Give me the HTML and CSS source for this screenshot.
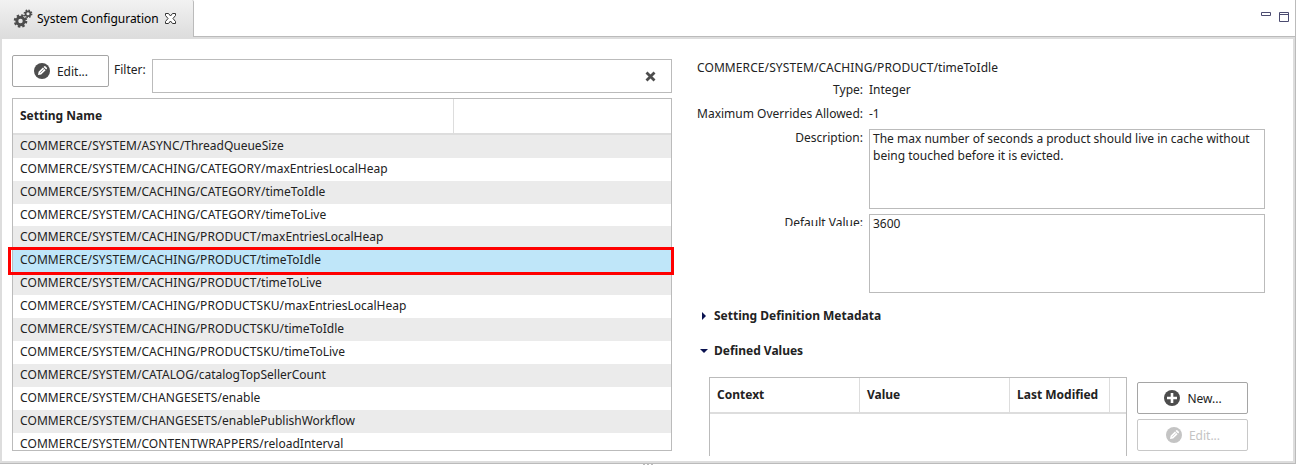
FILE: index.html
```html
<!DOCTYPE html>
<html lang="en">
<head>
<meta charset="utf-8">
<title>System Configuration</title>
<link rel="stylesheet" href="styles.css">
</head>
<body>
<svg class="defs" width="0" height="0">
  <symbol id="pencil" viewBox="0 0 16 16"><circle cx="8" cy="8" r="8" fill="currentColor"/><path fill="#fff" d="M4 12l.6-3.2 4.300-4.300 2.700 2.700-4.400 4.300zM9.500 3.900l.8-.7q.5-.4 1 0l1.600 1.600q.4.500 0 1l-.7.700z"/><path d="M6.300 9.800l3.500-3.500" stroke="currentColor" stroke-width=".7"/></symbol>
  <symbol id="plus" viewBox="0 0 16 16"><circle cx="8" cy="8" r="8" fill="currentColor"/><path d="M8 3v10M3 8h10" stroke="#fff" stroke-width="2.600"/></symbol>
</svg>
<div class="window">
  <header class="tabs">
    <div class="tab">
      <svg class="gears" width="20" height="20" viewBox="0 0 20 20" fill="none" stroke="#4d4d4d">
        <circle cx="7.500" cy="12" r="3.700" stroke-width="2.900"/><circle cx="7.500" cy="12" r="5.600" stroke-width="2.400" stroke-dasharray="2.400 1.998"/>
        <circle cx="15" cy="4.800" r="2.400" stroke-width="1.700"/><circle cx="15" cy="4.800" r="3.600" stroke-width="1.600" stroke-dasharray="1.500 1.327"/>
      </svg>
      <span>System Configuration</span>
      <svg class="close" width="11" height="11" viewBox="0 0 11 11"><path d="M.5.500h3l2 2.500 2-2.500h3v2l-2.500 3 2.500 3v2h-3l-2-2.500-2 2.500h-3v-2l2.500-3-2.500-3z" fill="#fff" stroke="#333"/></svg>
    </div>
    <div class="strip">
      <svg width="10" height="10" viewBox="0 0 10 10" fill="none" stroke="#4b4b70"><path d="M.5.500h9v3h-9z"/></svg>
      <svg width="10" height="10" viewBox="0 0 10 10" fill="none" stroke="#4b4b70"><path d="M.5.500h9v9h-9zM.5 2.500h9"/></svg>
    </div>
  </header>
  <main class="body">
    <section class="left">
      <div class="toolbar">
        <button class="btn edit"><svg class="ico"><use href="#pencil"/></svg>Edit...</button>
        <label>Filter:</label>
        <div class="filter"><svg width="11" height="11" viewBox="0 0 11 11"><path d="M1.500 1.500l8 8M9.500 1.500l-8 8" stroke="#4d4d4d" stroke-width="2.800"/></svg></div>
      </div>
      <div class="table">
        <div class="thead"><div class="th name">Setting Name</div></div>
        <div class="row"><span class="path">COMMERCE/SYSTEM/ASYNC/</span>ThreadQueueSize</div>
        <div class="row"><span class="path">COMMERCE/SYSTEM/CACHING/CATEGORY/</span>maxEntriesLocalHeap</div>
        <div class="row"><span class="path">COMMERCE/SYSTEM/CACHING/CATEGORY/</span>timeToIdle</div>
        <div class="row short"><span class="path">COMMERCE/SYSTEM/CACHING/CATEGORY/</span>timeToLive</div>
        <div class="row"><span class="path">COMMERCE/SYSTEM/CACHING/PRODUCT/</span>maxEntriesLocalHeap</div>
        <div class="row selected"><span class="path">COMMERCE/SYSTEM/CACHING/PRODUCT/</span>timeToIdle</div>
        <div class="row"><span class="path">COMMERCE/SYSTEM/CACHING/PRODUCT/</span>timeToLive</div>
        <div class="row"><span class="path">COMMERCE/SYSTEM/CACHING/PRODUCTSKU/</span>maxEntriesLocalHeap</div>
        <div class="row"><span class="path">COMMERCE/SYSTEM/CACHING/PRODUCTSKU/</span>timeToIdle</div>
        <div class="row"><span class="path">COMMERCE/SYSTEM/CACHING/PRODUCTSKU/</span>timeToLive</div>
        <div class="row"><span class="path">COMMERCE/SYSTEM/CATALOG/</span>catalogTopSellerCount</div>
        <div class="row"><span class="path">COMMERCE/SYSTEM/CHANGESETS/</span>enable</div>
        <div class="row"><span class="path">COMMERCE/SYSTEM/CHANGESETS/</span>enablePublishWorkflow</div>
        <div class="row"><span class="path">COMMERCE/SYSTEM/CONTENTWRAPPERS/</span>reloadInterval</div>
      </div>
      <div class="highlight"></div>
    </section>
    <section class="right">
      <div class="title"><span class="path">COMMERCE/SYSTEM/CACHING/PRODUCT/</span>timeToIdle</div>
      <div class="fields">
        <div class="lab">Type:</div><div>Integer</div>
        <div class="lab">Maximum Overrides Allowed:</div><div>-1</div>
        <div class="lab">Description:</div><div class="area desc">The max number of seconds a product should live in cache without<br>being touched before it is evicted.</div>
        <div class="lab clipped">Default Value:</div><div class="area value">3600</div>
      </div>
      <div class="sect"><svg width="8" height="8" viewBox="0 0 8 8"><path d="M2 0l4 4-4 4z" fill="#0a1250"/></svg>Setting Definition Metadata</div>
      <div class="sect second"><svg width="8" height="8" viewBox="0 0 8 8"><path d="M0 2h8l-4 4z" fill="#0a1250"/></svg>Defined Values</div>
      <div class="values">
        <div class="vtable"><div class="thead"><div class="th c1">Context</div><div class="th c2">Value</div><div class="th c3">Last Modified</div></div></div>
        <div class="actions">
          <button class="btn"><svg class="ico"><use href="#plus"/></svg>New...</button>
          <button class="btn off"><svg class="ico"><use href="#pencil"/></svg>Edit...</button>
        </div>
      </div>
    </section>
  </main>
</div>
<div class="sash"><i></i><i></i><i></i></div>
</body>
</html>
```
FILE: styles.css
```css
* { box-sizing: border-box; }
body { margin: 0; height: 465px; overflow: hidden; background: #fff; color: #222; font: 12px/17px "Noto Sans", sans-serif; }
svg { flex: none; display: block; }
.defs { position: absolute; }
.window { width: 1296px; height: 464px; border-right: 1px solid #bbb; border-bottom: 1px solid #bbb; display: flex; flex-direction: column; }
.tabs { height: 37px; flex: none; display: flex; }
.tab { width: 194px; border-right: 1px solid #bbb; border-top-right-radius: 2px; background: linear-gradient(#f2f2f2, #ddd); display: flex; align-items: center; padding-left: 13px; color: #000; }
.tab span { width: 123px; margin-left: 4px; white-space: nowrap; }
.close { margin-left: 5px; }
.strip { flex: 1; border-bottom: 1px solid #bbb; display: flex; justify-content: flex-end; gap: 8px; padding: 12px 6px 0 0; }
.body { flex: 1; min-height: 0; border: 2px solid #ddd; display: flex; }
.left { width: 670px; padding: 16px 0 0 10px; position: relative; display: flex; flex-direction: column; }
.toolbar { display: flex; height: 43px; flex: none; }
.btn { width: 97px; height: 32px; border: 1px solid #a5a5a5; border-radius: 2px; background: #fff; color: #222; font: inherit; padding: 0; display: flex; align-items: center; justify-content: center; gap: 7px; }
.btn.edit { padding-left: 1px; }
.ico { width: 16px; height: 16px; color: #4d4d4d; }
.toolbar label { width: 43px; padding: 6px 0 0 5px; }
.filter { width: 520px; height: 34px; margin-top: 4px; border: 1px solid #bbb; display: flex; align-items: center; justify-content: flex-end; padding-right: 15px; }
.table { width: 660px; height: 353px; border: 1px solid #bbb; overflow: hidden; }
.thead { height: 36px; border-bottom: 2px solid #ddd; display: flex; font-weight: bold; }
.th { border-right: 1px solid #ddd; padding: 8px 0 0 7px; white-space: nowrap; }
.name { width: 441px; }
.row { height: 23px; padding: 2px 0 0 7px; }
.row:nth-child(even) { background: #ebebeb; }
.row.short { height: 22px; }
.row.selected { background: #bfe6f9; }
.path { letter-spacing: .09px; }
.highlight { position: absolute; left: 6px; top: 208px; width: 666px; height: 28px; border: 3px solid #f00; }
.right { flex: 1; padding: 20px 0 0 25px; }
.title { height: 22px; }
.fields { display: grid; grid-template-columns: 166px 396px; column-gap: 6px; grid-template-rows: 24px 24px 85px 79px; }
.lab { text-align: right; }
.area { border: 1px solid #bbb; padding: 0 3px; }
.desc { height: 80px; }
.value { height: 79px; }
.clipped { height: 12px; overflow: hidden; }
.sect { display: flex; align-items: center; gap: 6px; margin-left: 3px; margin-top: 14px; font-weight: bold; }
.second { margin-top: 18px; }
.values { display: flex; margin: 18px 0 0 12px; gap: 10px; }
.vtable { width: 418px; height: 79px; border: 1px solid #bbb; border-bottom: 0; }
.c1, .c2 { width: 150px; }
.c3 { width: 100px; }
.actions { padding-top: 5px; display: flex; flex-direction: column; gap: 5px; }
.actions .btn { width: 111px; padding-left: 1px; }
.btn.off, .off .ico { color: #c4c4c4; }
.btn.off { border-color: #c8c8c8; }
.sash { position: absolute; left: 643px; top: 464px; display: flex; gap: 2px; }
.sash i { width: 2px; height: 1px; background: #bbb; }
```
